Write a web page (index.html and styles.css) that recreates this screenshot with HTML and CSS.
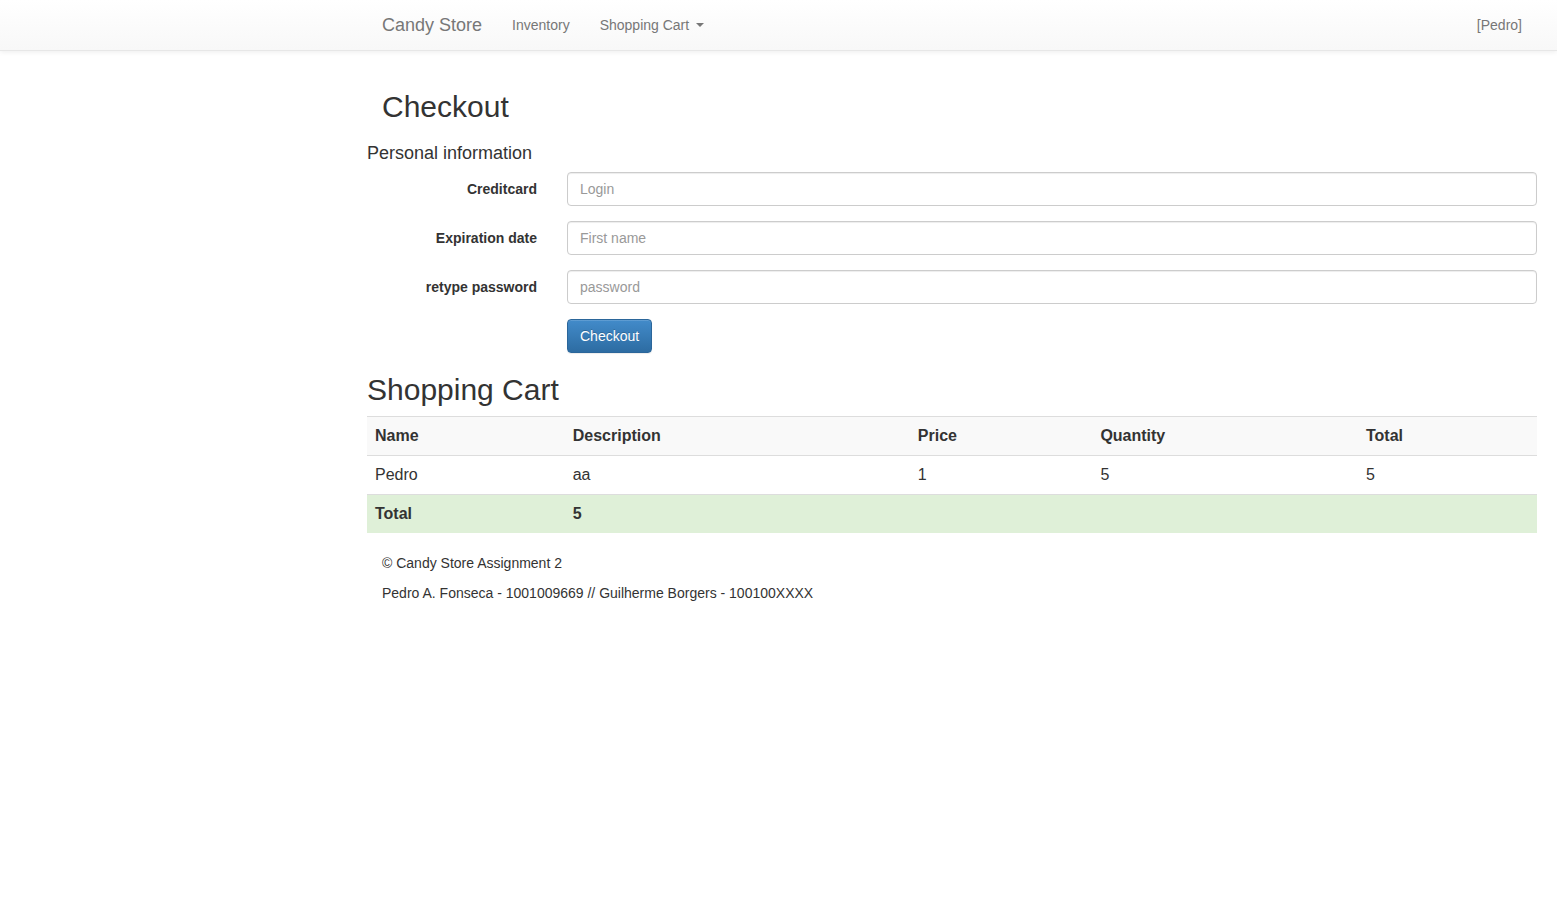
FILE: index.html
```html
<!DOCTYPE html>
<html lang="en">
<head>
<meta charset="utf-8">
<title>Candy Store - Checkout</title>
<link rel="stylesheet" href="styles.css">
</head>
<body>
<header class="navbar">
  <nav class="shell nav">
    <a class="brand" href="#">Candy Store</a>
    <a class="nav-link" href="#">Inventory</a>
    <button class="nav-link" type="button" aria-haspopup="true">Shopping Cart<span class="caret"></span></button>
    <a class="nav-link nav-user" href="#">[Pedro]</a>
  </nav>
</header>
<main class="shell">
  <h2 class="title page-title">Checkout</h2>
  <form class="form">
    <h4 class="subtitle">Personal information</h4>
    <div class="form-row">
      <label class="label" for="card">Creditcard</label>
      <input class="field" id="card" type="text" placeholder="Login">
    </div>
    <div class="form-row">
      <label class="label" for="expiry">Expiration date</label>
      <input class="field" id="expiry" type="text" placeholder="First name">
    </div>
    <div class="form-row">
      <label class="label" for="retype">retype password</label>
      <input class="field" id="retype" type="password" placeholder="password">
    </div>
    <div class="form-row">
      <button class="submit" type="submit">Checkout</button>
    </div>
  </form>
  <h2 class="title">Shopping Cart</h2>
  <table class="cart">
    <colgroup>
      <col class="col-name"><col class="col-description"><col class="col-price"><col class="col-quantity"><col>
    </colgroup>
    <thead>
      <tr><th>Name</th><th>Description</th><th>Price</th><th>Quantity</th><th>Total</th></tr>
    </thead>
    <tbody>
      <tr><td>Pedro</td><td>aa</td><td>1</td><td>5</td><td>5</td></tr>
    </tbody>
    <tfoot>
      <tr><th>Total</th><th>5</th><td></td><td></td><td></td></tr>
    </tfoot>
  </table>
</main>
<footer class="shell">
  <div class="footer">
    <p>© Candy Store Assignment 2</p>
    <p>Pedro A. Fonseca - 1001009669 // Guilherme Borgers - 100100XXXX</p>
  </div>
</footer>
</body>
</html>
```

FILE: styles.css
```css
* {
  box-sizing: border-box;
}

body {
  margin: 0;
  background: #fff;
  color: #333;
  font-family: "Liberation Sans", Arial, sans-serif;
  font-size: 14px;
  line-height: 20px;
}

.shell {
  margin: 0 20px 0 367px;
}

.navbar {
  border-bottom: 1px solid #e7e7e7;
  background: linear-gradient(#fff, #f8f8f8);
  box-shadow: 0 1px 5px rgba(0, 0, 0, .075);
}

.nav {
  display: flex;
}

.brand,
.nav-link {
  display: flex;
  align-items: center;
  padding: 15px;
  border: 0;
  background: none;
  color: #777;
  font-family: inherit;
  font-size: 14px;
  line-height: 20px;
  text-decoration: none;
  white-space: nowrap;
}

.brand {
  font-size: 18px;
}

.nav-user {
  margin-left: auto;
}

.caret {
  margin-left: 7px;
  border-top: 4px solid #777;
  border-right: 4px solid transparent;
  border-left: 4px solid transparent;
}

.title {
  margin: 20px 0 10px;
  font-size: 30px;
  font-weight: 400;
  line-height: 33px;
}

.page-title {
  margin: 39px 15px 20px;
}

.subtitle {
  margin: 0 0 9px;
  font-size: 18px;
  font-weight: 400;
  line-height: 20px;
}

.form-row {
  display: grid;
  grid-template-columns: 17fr 97fr;
  column-gap: 30px;
  margin: 0 0 15px;
}

.label {
  padding-top: 7px;
  font-weight: 700;
  text-align: right;
}

.field {
  width: 100%;
  height: 34px;
  padding: 6px 12px;
  border: 1px solid #ccc;
  border-radius: 4px;
  background: #fff;
  box-shadow: inset 0 1px 1px rgba(0, 0, 0, .075);
  color: #555;
  font-family: inherit;
  font-size: 14px;
  line-height: 20px;
}

.field::placeholder {
  color: #999;
  opacity: 1;
}

.submit {
  grid-column: 2;
  justify-self: start;
  padding: 6px 12px;
  border: 1px solid #2b669a;
  border-radius: 4px;
  background: linear-gradient(#428bca, #2d6ca2);
  box-shadow: inset 0 1px 0 rgba(255, 255, 255, .15), 0 1px 1px rgba(0, 0, 0, .075);
  color: #fff;
  font-family: inherit;
  font-size: 14px;
  line-height: 20px;
  text-shadow: 0 -1px 0 rgba(0, 0, 0, .2);
}

.cart {
  width: 100%;
  margin-bottom: 20px;
  border-spacing: 0;
  table-layout: fixed;
  font-size: 16px;
  line-height: 22px;
}

.cart th,
.cart td {
  padding: 8px;
  border-top: 1px solid #ddd;
  text-align: left;
}

.cart thead th {
  background: #f9f9f9;
}

.cart tfoot th,
.cart tfoot td {
  background: #dff0d8;
}

.col-name {
  width: 16.9%;
}

.col-description {
  width: 29.5%;
}

.col-price {
  width: 15.6%;
}

.col-quantity {
  width: 22.7%;
}

.footer {
  padding: 0 15px;
}

.footer p {
  margin: 0 0 10px;
}
```
